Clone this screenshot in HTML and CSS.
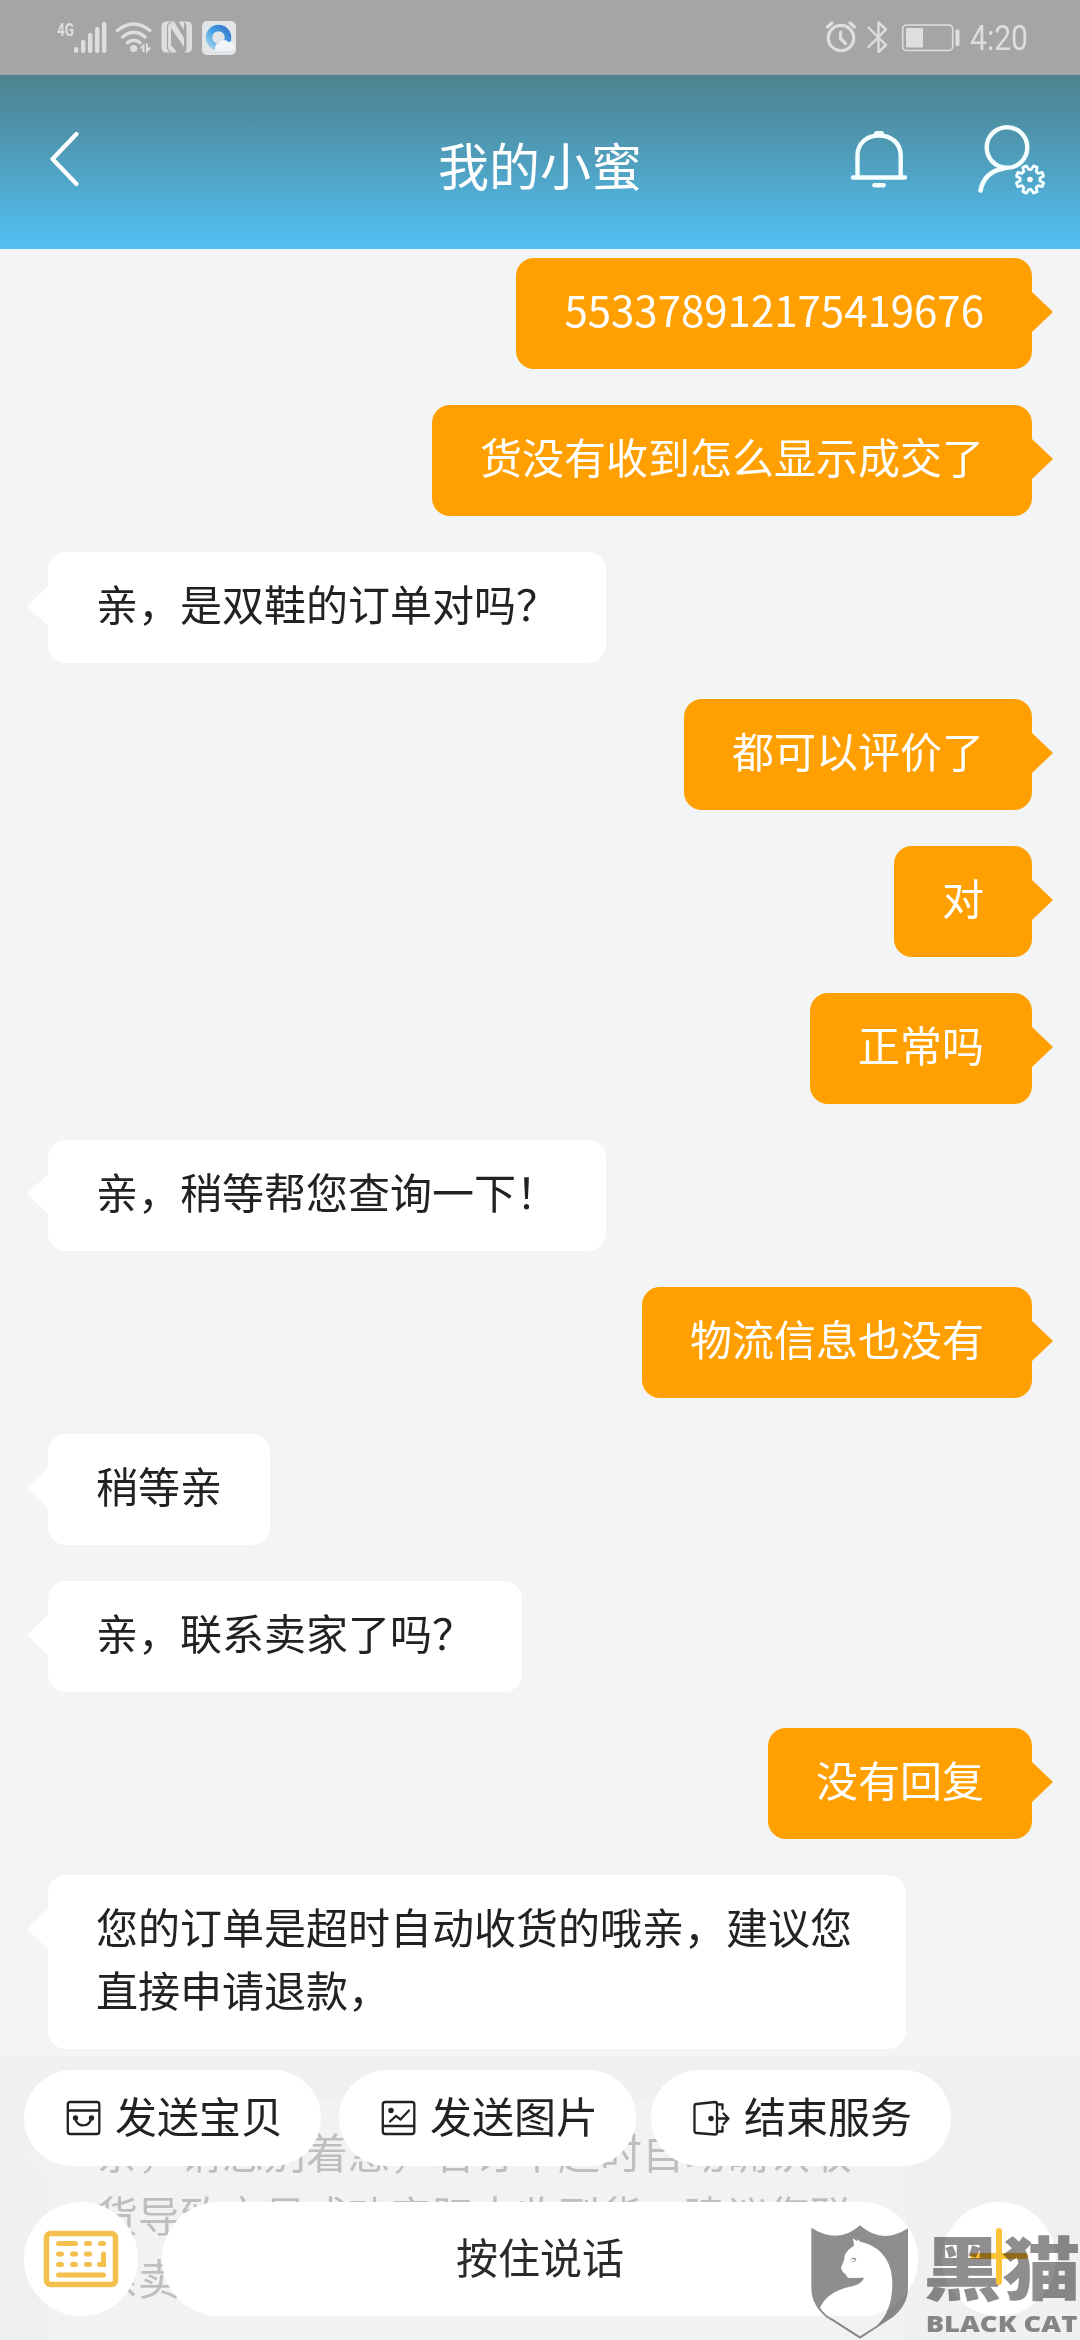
FILE: index.html
```html
<!DOCTYPE html>
<html lang="zh-CN">
<head>
<meta charset="utf-8">
<title>我的小蜜</title>
<link rel="stylesheet" href="styles.css">
</head>
<body>
<div class="status">
  <svg class="status-left" viewBox="50 0 200 75" width="200" height="75">
    <g fill="#dedede">
      <text x="57" y="36" class="net" textLength="17" lengthAdjust="spacingAndGlyphs">4G</text>
      <rect x="74" y="47" width="4.4" height="6" rx="2"/>
      <rect x="81" y="40" width="4.4" height="13" rx="2"/>
      <rect x="88" y="33" width="4.4" height="20" rx="2"/>
      <rect x="95" y="27" width="4.4" height="26" rx="2"/>
      <rect x="102" y="22" width="4.4" height="31" rx="2"/>
      <circle cx="133.700" cy="48.500" r="3.600"/>
      <path d="M139.500 48.500l5-5.500v9h-2v-3.500zM151.500 47.500l-5.500 6v-10h2v4z"/>
      <path d="M166.500 21.500h7.500L184 38V30l-5.500-8.500h8.500q5 0 5 5v21q0 5-5 5h-2.500q2-1 2-5V26q0-3-2.500-4V47L171 28v17l6 7.500h-10.500q-5 0-5-5v-21q0-5 5-5z"/>
      <path d="M171.500 22.500q-4 0-4 5v19q0 5 4 5.500" fill="none" stroke="#a5a5a5" stroke-width="1.200"/>
      <rect x="202" y="21" width="34" height="34" rx="5" fill="#e2e5e8"/>
    </g>
    <g fill="none" stroke="#dedede" stroke-width="3.400" stroke-linecap="round">
      <path d="M117.500 30.500q16-13 32.500 0M122.500 37q11.500-9.500 22.500 0M127.500 42.700q6.500-5 12.500 0"/>
    </g>
    <defs><linearGradient id="q" x1="0" y1="1" x2="1" y2="0"><stop offset="0" stop-color="#9ed3ef"/><stop offset=".5" stop-color="#459fe2"/><stop offset="1" stop-color="#3577d0"/></linearGradient></defs>
    <circle cx="218.500" cy="37.500" r="9.500" fill="none" stroke="url(#q)" stroke-width="6.500"/>
    <path d="M216 51a5 5 0 0 1 3-8a6 6 0 0 1 9.500-1a4.500 4.500 0 0 1 2.500 9z" fill="#f2f5f8"/>
  </svg>
  <div class="status-right">
    <svg viewBox="820 0 145 75" width="145" height="75" fill="none" stroke="#dedede" stroke-linecap="round" stroke-linejoin="round">
      <circle cx="841" cy="38" r="12.700" stroke-width="3.200"/>
      <path d="M840.500 32v6.500l5 5M827.500 27l4.500-4M854.500 27l-4.500-4" stroke-width="3.200"/>
      <path d="M868.500 27.500L886 45l-7.500 7V22.500l7.500 7L868.500 47" stroke-width="2.400"/>
      <rect x="902.700" y="25" width="50" height="25.500" rx="4" stroke-width="1.600"/>
      <rect x="906" y="28" width="17" height="19.500" rx="1" fill="#dedede" stroke="none"/>
      <rect x="955.500" y="29.500" width="4" height="16.500" rx="1.500" fill="#dedede" stroke="none"/>
    </svg>
    <span class="clock">4:20</span>
  </div>
</div>

<header class="header">
  <svg class="back" viewBox="0 0 40 60" width="40" height="60"><path d="M34.500 5L10.500 30L34.500 55" fill="none" stroke="#fff" stroke-width="4.300" stroke-linecap="round" stroke-linejoin="round"/></svg>
  <h1 class="title">我的小蜜</h1>
  <svg class="actions" viewBox="840 115 220 90" width="220" height="90" fill="none" stroke="#f4feff" stroke-linecap="round" stroke-linejoin="round">
    <path d="M857.500 177v-21.500c0-12 9-20 21.500-20s21.700 8 21.700 20V177M853 177.500h52" stroke-width="4.400"/>
    <path d="M876.500 133.500h5" stroke-width="5"/><path d="M874.500 185.200h9" stroke-width="4.600"/>
    <circle cx="1007" cy="147.500" r="20.300" stroke-width="4.400"/>
    <path d="M1004 168.500C991 170.500 983 178 980.500 190.500" stroke-width="4.600"/>
    <g transform="translate(1030 179.500)">
      <path stroke-width="2.800" d="M9.900-1.200V1.200L13.600 3.500 12.100 7.100 7.900 6.200 6.200 7.900 7.100 12.100 3.500 13.600 1.200 9.900H-1.200L-3.500 13.600-7.100 12.100-6.200 7.900-7.900 6.200-12.100 7.100-13.600 3.500-9.900 1.200V-1.200L-13.600-3.500-12.100-7.100-7.900-6.200-6.200-7.900-7.100-12.100-3.500-13.600-1.200-9.900H1.200L3.500-13.600 7.100-12.100 6.200-7.900 7.900-6.200 12.100-7.100 13.600-3.500z"/>
      <circle r="2.800" fill="#fff" stroke="none"/>
    </g>
  </svg>
</header>

<main class="chat">
  <div class="msg mine">553378912175419676</div>
  <div class="msg mine">货没有收到怎么显示成交了</div>
  <div class="msg">亲，是双鞋的订单对吗？</div>
  <div class="msg mine">都可以评价了</div>
  <div class="msg mine">对</div>
  <div class="msg mine">正常吗</div>
  <div class="msg">亲，稍等帮您查询一下！</div>
  <div class="msg mine">物流信息也没有</div>
  <div class="msg">稍等亲</div>
  <div class="msg">亲，联系卖家了吗？</div>
  <div class="msg mine">没有回复</div>
  <div class="msg">您的订单是超时自动收货的哦亲，建议您直接申请退款，</div>
  <div class="msg last">亲，请您别着急，若订单超时自动确认收货导致交易成功实际未收到货，建议您联系卖家</div>
</main>

<footer class="dock">
  <div class="quick">
    <div class="pill">
      <svg viewBox="0 0 36 36" width="36" height="36" fill="none" stroke="#222" stroke-width="2.300" stroke-linecap="round"><rect x="1.800" y="2" width="31.500" height="32" rx="2.500"/><path d="M2 10.500h31M9.500 19c1.500 8.500 13.500 8.500 15.500 0"/><circle cx="9.500" cy="18" r="1.500" fill="#222"/><circle cx="25.500" cy="18" r="1.500" fill="#222"/></svg>
      <span>发送宝贝</span>
    </div>
    <div class="pill">
      <svg viewBox="0 0 36 36" width="36" height="36" fill="none" stroke="#222" stroke-width="2.300" stroke-linecap="round"><rect x="1.800" y="2" width="31.500" height="32" rx="2.500"/><path d="M2 26h31M9 21.500l6-5.500 4.500 3.500 8.500-9"/><circle cx="10" cy="10.500" r="1.600" fill="#222"/></svg>
      <span>发送图片</span>
    </div>
    <div class="pill end">
      <svg viewBox="0 0 39 36" width="39" height="36" fill="none" stroke="#222" stroke-width="2.300" stroke-linecap="round" stroke-linejoin="round"><path d="M4.500 4L23 2q2 0 2 2v28.500q0 2-2 2l-18.500-1.500q-2 0-2-2V6q0-2 2-2zM26 4.500h4.500V9M26 31.500h4.500V27M26 18.500h10M31.500 13.500l5 5-5 5.500"/><circle cx="19" cy="18.500" r="1.600" fill="#222"/></svg>
      <span>结束服务</span>
    </div>
  </div>
  <div class="inputs">
    <div class="round">
      <svg viewBox="0 0 76 58" width="76" height="58" fill="none" stroke="#f4c04d" stroke-width="5" stroke-linecap="round"><rect x="3.500" y="3.500" width="69" height="51" rx="4" stroke-width="5.500"/><path d="M15.500 13.500h17M43.500 13.500h3M57.500 13.500h3M15.500 24h3M29.500 24h3M43.500 24h3M15.500 34.500h3M29.500 34.500h3M43.500 34.500h3M15.500 45h45M60.500 24v10.500h-4"/></svg>
    </div>
    <div class="talk">按住说话</div>
    <div class="round plus"><i class="plus-h"></i><i class="plus-v"></i></div>
  </div>
</footer>

<svg class="watermark" viewBox="0 0 900 420" width="300" height="140">
  <g fill="#8f8d8e">
    <path fill-rule="evenodd" d="M94 83Q175 135 240 76Q306 135 384 85V262Q384 315 340 350L240 416L137 350Q94 315 94 262ZM219 115L222 137C202 149 193 163 193 177L183 204Q186 216 196 222L204 234L252 233C247 248 230 256 209 260C168 270 136 287 120 323Q136 347 160 358L240 409L290 377C322 347 337 306 337 250C337 185 304 139 241 125L233 118L231 124Z"/>
    <path d="M210 180q12-14 19-2q-4 10-15 9l4-3q6 0 7-5q-4-4-15 1z"/>
    <text class="brand" x="430" y="284" textLength="472" lengthAdjust="spacingAndGlyphs">黑猫</text>
    <text class="brand-en" x="437" y="396" textLength="455" lengthAdjust="spacingAndGlyphs">BLACK CAT</text>
  </g>
</svg>
</body>
</html>
```
FILE: styles.css
```css
* { box-sizing: border-box; }
html, body { margin: 0; }
body {
  position: relative;
  width: 1080px;
  height: 2340px;
  overflow: hidden;
  display: flex;
  flex-direction: column;
  background: #f2f4f6;
  color: #222;
  font: 42px/63px "Noto Sans CJK SC", sans-serif;
}
svg { display: block; flex: none; }

.status {
  height: 75px;
  flex: none;
  display: flex;
  justify-content: space-between;
  padding: 0 50px;
  background: #a5a5a5;
}
.net { font: 700 18px Roboto, sans-serif; }
.status-right { display: flex; align-items: center; width: 210px; }
.clock {
  font: 35px/75px Roboto, sans-serif;
  color: #dedede;
  margin-left: 5px;
  transform: scaleX(.86);
  transform-origin: left;
  padding-top: 1px;
}

.header {
  height: 173.5px;
  flex: none;
  display: grid;
  grid-template-columns: 220px 1fr 220px;
  align-items: center;
  padding: 0 20px 0 42px;
  background: linear-gradient(#4d828d, #4f9cb9 45%, #53c1f5);
}
.back { margin-bottom: 6px; }
.title {
  margin: 5px 0 0 -22px;
  text-align: center;
  font-size: 51px;
  font-weight: 400;
  line-height: 72px;
  color: #fff;
}
.actions { margin-bottom: 4px; }

.chat {
  flex: 1;
  min-height: 0;
  overflow: hidden;
  display: flex;
  flex-direction: column;
  align-items: flex-start;
  gap: 36px;
  padding: 9.5px 48px 0;
}
.msg {
  position: relative;
  flex: none;
  max-width: 858px;
  padding: 19px 48px 29px;
  border-radius: 18px;
  background: #fff;
  word-break: break-all;
}
.msg::before {
  content: "";
  position: absolute;
  top: 33px;
  left: -21px;
  width: 22px;
  height: 42px;
  background: inherit;
  clip-path: polygon(100% 0, 0 50%, 100% 100%);
}
.mine { align-self: flex-end; background: #ffa000; color: #fff; }
.mine::before { left: auto; right: -21px; clip-path: polygon(0 0, 100% 50%, 0 100%); }
.last { margin-top: 15px; height: 260px; }

.dock {
  position: absolute;
  left: 0;
  right: 0;
  bottom: 0;
  height: 283px;
  padding: 13px 24px 0;
  background: rgba(237, 238, 240, .77);
}
.quick { display: flex; gap: 18px; }
.pill {
  display: flex;
  align-items: center;
  gap: 13px;
  width: 297px;
  height: 96px;
  padding-left: 42px;
  border-radius: 48px;
  background: #fff;
}
.pill span { margin-top: -7px; }
.end { width: 300px; margin-left: -3px; padding-left: 41px; }
.inputs { display: flex; gap: 24px; margin-top: 36px; }
.round, .talk {
  height: 114px;
  border-radius: 57px;
  background: #fff;
  display: flex;
  align-items: center;
  justify-content: center;
}
.round { width: 114px; flex: none; }
.talk { flex: 1; padding-bottom: 7px; color: #2a2a2a; }
.plus { display: grid; padding-bottom: 6px; }
.plus-h, .plus-v {
  grid-area: 1 / 1;
  place-self: center;
  border-radius: 3px;
  background: #fdc235;
}
.plus-h { width: 58px; height: 6px; }
.plus-v { position: relative; z-index: 2; width: 6px; height: 57px; }

.watermark {
  position: absolute;
  right: 0;
  bottom: 0;
  z-index: 1;
  mix-blend-mode: multiply;
}
.brand { font: 900 208px "Noto Sans CJK SC", sans-serif; }
.brand-en { font: 800 66px "Open Sans", sans-serif; }
```
